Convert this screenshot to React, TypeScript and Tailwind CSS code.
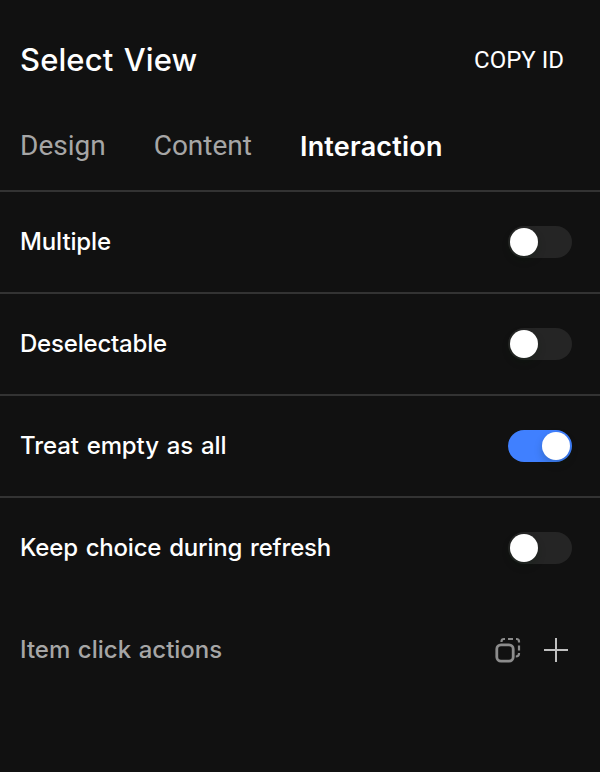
import React from "react";

const settings = [
  { label: "Multiple", on: false, type: "tracking-[-0.12px]" },
  { label: "Deselectable", on: false, type: "tracking-[-0.2px]" },
  { label: "Treat empty as all", on: true, type: "tracking-[-0.1px] [word-spacing:1.6px]" },
  { label: "Keep choice during refresh", on: false, type: "tracking-[-0.2px] [word-spacing:1.7px]" },
];

function Toggle({ on }: { on: boolean }) {
  return (
    <div className={`flex h-8 w-16 items-center rounded-full p-0.5 ${on ? "justify-end bg-[#4080ff]" : "justify-start bg-[#252525]"}`}>
      <div className="size-7 rounded-full bg-white shadow-[0_4px_8px_rgba(0,35,11,0.2)]" />
    </div>
  );
}

function CopyIcon() {
  return (
    <svg width="28" height="28" viewBox="0 0 28 28" fill="none" stroke="#8c8c8c" strokeWidth="2.2">
      <rect x="2.8" y="8.8" width="16.4" height="16.4" rx="4.2" strokeWidth="2.8" />
      <path d="M7.5 6V5.5Q7.5 3 10 3H11M14 3H19M22 3H22.5Q25 3 25 5.5V6.5M25 9.5V14.5M25 17V17.5Q25 20.5 21.8 20.5" />
    </svg>
  );
}

export default function App() {
  return (
    <main className="h-[772px] w-[600px] overflow-hidden bg-[#111111] font-[Inter,sans-serif] text-white">
      <header className="flex h-[120px] items-center justify-between pr-9 pl-5">
        <h1 className="pb-px text-[31px] leading-none font-[450] tracking-[0.1px] [word-spacing:2px]">Select View</h1>
        <button className="font-[Roboto,sans-serif] text-2xl leading-none">COPY ID</button>
      </header>
      <nav className="flex h-[72px] gap-12 border-b-2 border-[#333333] px-5 pt-[5px] font-[Roboto,sans-serif] text-[28px] text-[#a6a6a6]">
        <span>Design</span>
        <span>Content</span>
        <span className="pt-px font-[Inter,sans-serif] text-[27px] leading-[42px] font-semibold tracking-[0.2px] text-white">Interaction</span>
      </nav>
      {settings.map((s, i) => (
        <div key={s.label} className={`flex items-center justify-between pr-7 pl-5 ${i < 3 ? "h-[102px] border-b-2 border-[#333333]" : "h-[100px]"}`}>
          <span className={`text-2xl font-medium ${s.type}`}>{s.label}</span>
          <Toggle on={s.on} />
        </div>
      ))}
      <div className="flex h-[104px] items-center justify-between pr-8 pl-5 text-[#a6a6a6]">
        <span className="text-2xl font-medium [word-spacing:1.2px]">Item click actions</span>
        <div className="flex items-center gap-[22px]">
          <CopyIcon />
          <svg width="24" height="24" viewBox="0 0 24 24" stroke="#c0c0c0" strokeWidth="2"><path d="M12 0V24M0 12H24" /></svg>
        </div>
      </div>
    </main>
  );
}
